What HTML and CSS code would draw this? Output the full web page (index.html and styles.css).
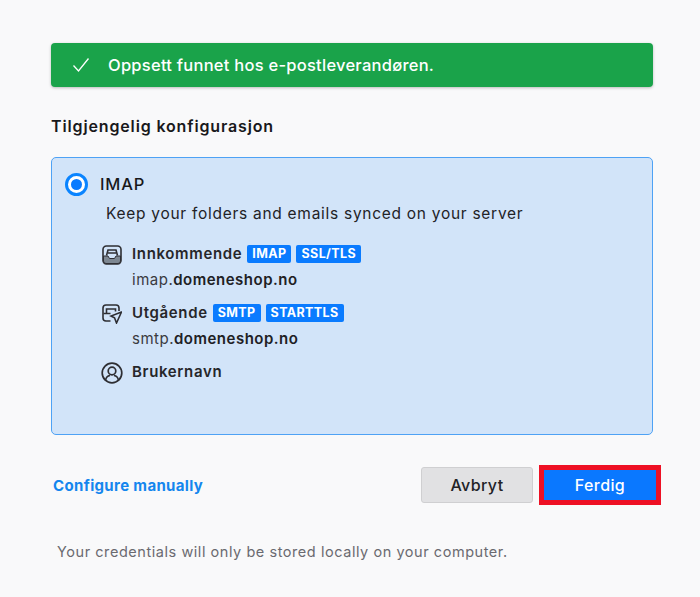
FILE: index.html
```html
<!DOCTYPE html>
<html lang="no">
<head>
<meta charset="utf-8">
<title>Oppsett</title>
<link rel="stylesheet" href="styles.css">
</head>
<body>
<main class="page">
  <div class="notice">
    <svg class="notice-check" width="18" height="16" viewBox="0 0 18 16"><path d="M1.5 8.5 6.5 14 16.5 1.5" fill="none" stroke="#fff" stroke-width="1.3"/></svg>
    <span>Oppsett funnet hos e-postleverandøren.</span>
  </div>
  <h2 class="heading">Tilgjengelig konfigurasjon</h2>
  <section class="card">
    <div class="card-title">
      <span class="radio"></span>
      <span>IMAP</span>
    </div>
    <p class="desc">Keep your folders and emails synced on your server</p>
    <div class="server">
      <svg class="icon" width="20" height="20" viewBox="0 0 20 20" fill="none" stroke="#2e2e33" stroke-width="1.6"><rect x="1" y="1" width="18" height="18" rx="3.4"/><path d="M1.5 11H6l1.5 2.5h5L14 11h4.500V16a2.500 2.500 0 0 1-2.500 2.500H4A2.500 2.500 0 0 1 1.500 16z" fill="#7d8792" stroke-width="1"/><path d="M4.500 10.500 6 5h8l1.500 5.500M6 8h8"/></svg>
      <div class="server-body">
        <div class="server-line"><b>Innkommende</b><span class="tag">IMAP</span><span class="tag">SSL/TLS</span></div>
        <div class="host">imap.<b>domeneshop.no</b></div>
      </div>
    </div>
    <div class="server">
      <svg class="icon" width="20" height="20" viewBox="0 0 20 20" fill="none" stroke="#2e2e33" stroke-width="1.6"><path d="M8.500 17H4a3 3 0 0 1-3-3V4a3 3 0 0 1 3-3h10a3 3 0 0 1 3 3v3"/><path d="M4.500 9V5h9v2.500M1.500 9.500h7"/><path d="M19.500 8 9 12l3.500 1.800L14.500 19z"/></svg>
      <div class="server-body">
        <div class="server-line"><b>Utgående</b><span class="tag">SMTP</span><span class="tag">STARTTLS</span></div>
        <div class="host">smtp.<b>domeneshop.no</b></div>
      </div>
    </div>
    <div class="server">
      <svg class="icon icon-user" width="22" height="22" viewBox="0 0 22 22" fill="none" stroke="#2e2e33" stroke-width="1.700"><circle cx="11" cy="11" r="9.800"/><circle cx="11" cy="9" r="3.800"/><path d="M4.500 18.500c.5-3.500 2.500-4.700 4.500-5M17.500 18.500c-.5-3.500-2.500-4.700-4.500-5"/></svg>
      <div class="server-body"><div class="server-line"><b>Brukernavn</b></div></div>
    </div>
  </section>
  <div class="actions">
    <a class="manual" href="#">Configure manually</a>
    <div class="buttons">
      <button class="btn btn-cancel" type="button">Avbryt</button>
      <span class="highlight"><button class="btn btn-done" type="button">Ferdig</button></span>
    </div>
  </div>
  <p class="foot">Your credentials will only be stored locally on your computer.</p>
</main>
</body>
</html>
```

FILE: styles.css
```css
* { box-sizing: border-box; }
html, body { margin: 0; height: 100%; }
body {
  background: #f9f9fa;
  color: #18181b;
  font-family: Inter, "Liberation Sans", sans-serif;
  overflow: hidden;
}
.page {
  width: 700px;
  padding: 43px 47px 0 51px;
}
.notice {
  height: 44px;
  background: #1aa34a;
  border-radius: 4px;
  box-shadow: 0 1px 3px rgba(0, 0, 0, 0.25);
  color: #fff;
  display: flex;
  align-items: center;
  padding-left: 21px;
  gap: 18px;
  font-size: 16.5px;
  font-weight: 500;
  letter-spacing: 0.25px;
}
.heading {
  margin: 29px 0 0;
  font-size: 16px;
  line-height: 20px;
  font-weight: 600;
  letter-spacing: 0.85px;
}
.card {
  margin-top: 21px;
  height: 278px;
  background: #d2e4f9;
  border: 1px solid #4ea2f5;
  border-radius: 5px;
  padding: 14px 0 0 13px;
}
.card-title {
  display: flex;
  align-items: center;
  gap: 12px;
  font-size: 16.5px;
  font-weight: 500;
  letter-spacing: 0.8px;
  height: 24px;
}
.radio {
  width: 23px;
  height: 23px;
  border-radius: 50%;
  background: #fff;
  border: 3px solid #0a84ff;
  display: flex;
  align-items: center;
  justify-content: center;
}
.radio::after {
  content: "";
  width: 11px;
  height: 11px;
  border-radius: 50%;
  background: #0a7bff;
}
.desc {
  margin: 8px 0 0 41px;
  font-size: 15.5px;
  line-height: 20px;
  letter-spacing: 0.72px;
  color: #222226;
}
.server {
  display: flex;
  align-items: flex-start;
  gap: 10px;
  margin: 20px 0 0 37px;
}
.server + .server { margin-top: 13px; }
.server:last-child { margin-top: 13px; }
.icon { flex: none; margin-top: 1px; width: 20px; }
.icon-user { width: 22px; margin: 0 -1px 0 -1px; }
.server-body { font-size: 15px; line-height: 20px; letter-spacing: 0.5px; color: #26262a; }
.server-line { display: flex; align-items: center; gap: 5px; }
.server-line b { font-weight: 600; letter-spacing: 0.65px; }
.tag {
  background: #0a7bff;
  color: #fff;
  font-size: 12.5px;
  line-height: 18px;
  height: 18px;
  font-weight: 700;
  border-radius: 2px;
  padding: 0 5px;
  letter-spacing: 0.4px;
}
.host { margin-top: 6px; color: #3a3a40; }
.host b { font-weight: 600; color: #202024; }
.actions {
  display: flex;
  justify-content: space-between;
  align-items: center;
  margin-top: 30px;
  height: 40px;
}
.manual {
  margin: 0 0 0 2px;
  color: #1486ee;
  font-size: 15px;
  font-weight: 700;
  letter-spacing: 0.35px;
  text-decoration: none;
}
.buttons {
  display: flex;
  align-items: center;
  gap: 6px;
  margin-right: -8px;
}
.btn {
  font-family: inherit;
  font-size: 16px;
  font-weight: 500;
  letter-spacing: 0.4px;
  padding: 0;
}
.btn-cancel {
  width: 112px;
  height: 36px;
  background: #e1e1e3;
  border: 1px solid #cfcfd1;
  border-radius: 3px;
  color: #222226;
}
.highlight {
  display: block;
  width: 122px;
  height: 40px;
  border: 5px solid #ee1024;
  background: #0a6fe8;
}
.btn-done {
  display: block;
  width: 112px;
  height: 30px;
  background: #0a78ff;
  color: #fff;
  border: 0;
}
.foot {
  margin: 37px 0 0 6px;
  font-size: 14.5px;
  line-height: 20px;
  letter-spacing: 0.55px;
  color: #6a6a70;
}
```
